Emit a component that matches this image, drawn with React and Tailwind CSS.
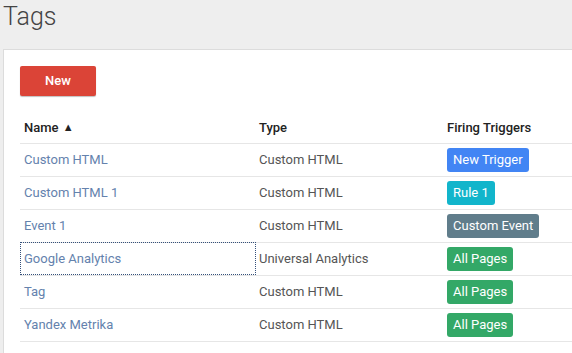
const tags = [
  { name: 'Custom HTML', type: 'Custom HTML', trigger: 'New Trigger', color: 'bg-[#4285f4]' },
  { name: 'Custom HTML 1', type: 'Custom HTML', trigger: 'Rule 1', color: 'bg-[#12b5cb]' },
  { name: 'Event 1', type: 'Custom HTML', trigger: 'Custom Event', color: 'bg-[#607d8b]' },
  { name: 'Google Analytics', type: 'Universal Analytics', trigger: 'All Pages', color: 'bg-[#33a867]', focused: true },
  { name: 'Tag', type: 'Custom HTML', trigger: 'All Pages', color: 'bg-[#33a867]' },
  { name: 'Yandex Metrika', type: 'Custom HTML', trigger: 'All Pages', color: 'bg-[#33a867]' },
]

function App() {
  return (
    <div className="min-h-[353px] overflow-hidden bg-[#eeeeee] font-['Roboto',sans-serif]">
      <h1 className="h-[49px] pl-[3px] pt-[1px] text-[25px] font-light leading-[32px] text-[#444]">Tags</h1>

      <div className="ml-[3px] min-h-[304px] border-l border-t border-[#dcdcdc] bg-white pl-[16px] pt-[16px]">
        <button className="h-[30px] w-[76px] rounded-[2px] bg-[#db4437] text-[13px] font-medium text-white shadow-[0_1px_1px_rgba(0,0,0,0.25)]">
          New
        </button>

        <table className="mt-[16px] w-full border-collapse text-[13px]">
          <thead>
            <tr className="h-[31px] border-b border-[#e6e6e6] text-left text-[#222]">
              <th className="w-[236px] pl-[4px] font-medium">
                Name <span className="ml-[1px] text-[11px] align-[1px]">▲</span>
              </th>
              <th className="w-[188px] pl-[3px] font-medium">Type</th>
              <th className="pl-[3px] font-medium">Firing Triggers</th>
            </tr>
          </thead>
          <tbody>
            {tags.map((t) => (
              <tr key={t.name} className="h-[33px] border-b border-[#e6e6e6]">
                <td className={`pl-[4px] text-[#6482ad] ${t.focused ? 'outline-1 outline-dotted outline-[#34507a] -outline-offset-1' : ''}`}>
                  {t.name}
                </td>
                <td className="pl-[3px] text-[#555]">{t.type}</td>
                <td className="pl-[3px]">
                  <span className={`inline-block h-[24px] rounded-[3px] px-[6px] leading-[24px] text-white ${t.color}`}>
                    {t.trigger}
                  </span>
                </td>
              </tr>
            ))}
          </tbody>
        </table>
      </div>
    </div>
  )
}

export default App
